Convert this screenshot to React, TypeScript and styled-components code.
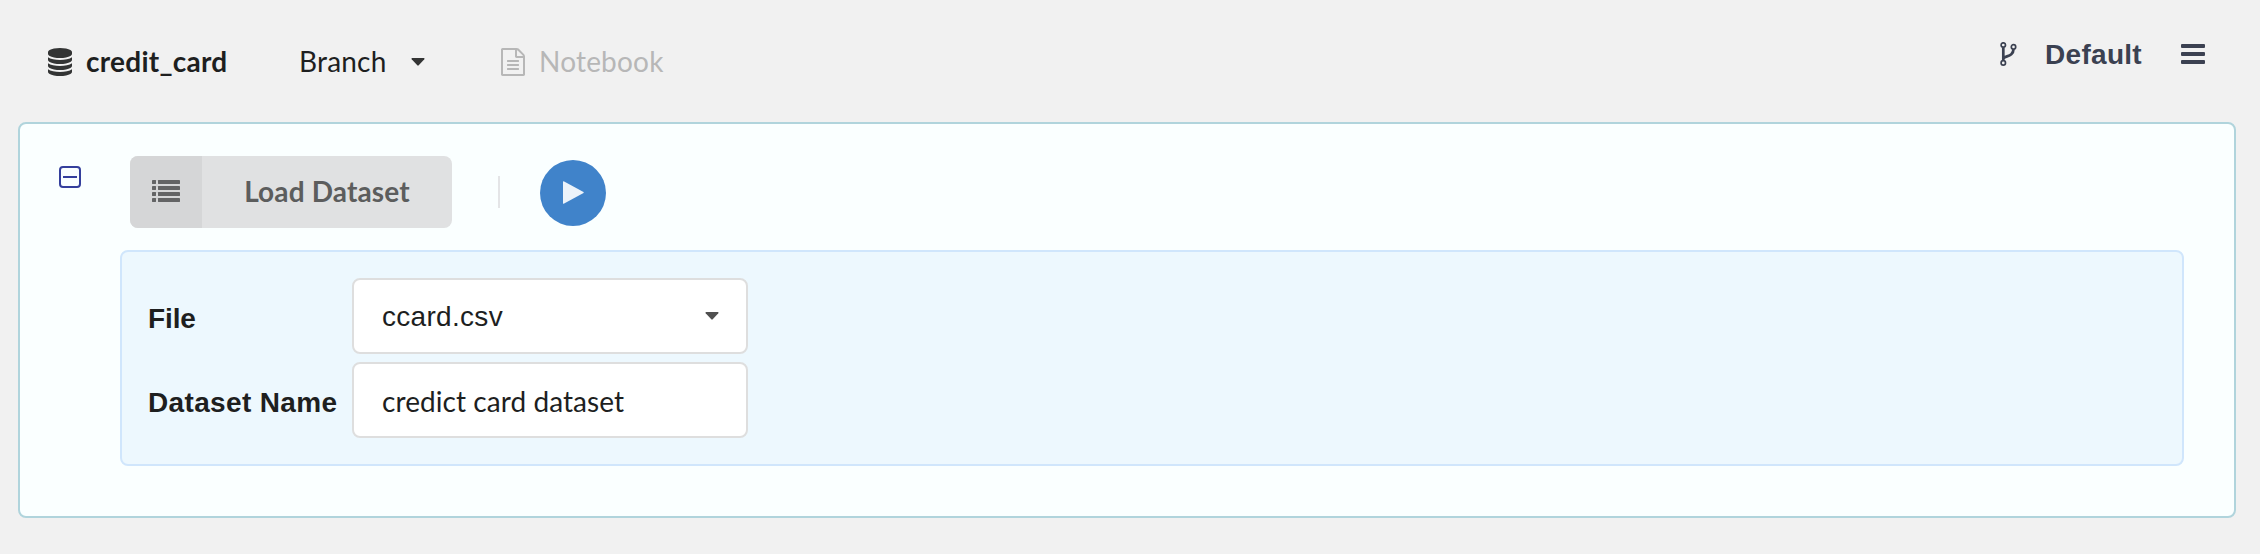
import React from "react";
import styled, { createGlobalStyle } from "styled-components";

const LATO = `Lato, "Open Sans", sans-serif`;
const HELVETICA = `"Liberation Sans", Arial, sans-serif`;

const GlobalStyle = createGlobalStyle`
  *, *::before, *::after { box-sizing: border-box; }
  body {
    margin: 0;
    background: #f1f1f1;
    font-family: ${LATO};
    font-size: 28px;
    line-height: 34px;
    color: #1e1f1f;
  }
  svg { display: block; flex: none; }
`;

const Page = styled.main`
  display: flex;
  flex-direction: column;
  height: 554px;
  padding: 0 24px 36px 18px;
`;

const TopBar = styled.header`
  display: flex;
  align-items: flex-start;
  justify-content: space-between;
  height: 122px;
  padding: 0 30px;
`;

const BarGroup = styled.nav`
  display: flex;
  padding-top: 44px;
`;

const BarItem = styled.div<{ $width?: number; $gap: number; $muted?: boolean }>`
  display: flex;
  align-items: center;
  gap: ${(p) => p.$gap}px;
  width: ${(p) => (p.$width ? `${p.$width}px` : "auto")};
  color: ${(p) => (p.$muted ? "#b7b7b7" : "#1e1f1f")};

  svg { margin-top: 2px; }
`;

const Text = styled.span<{ $bold?: boolean; $spacing?: number }>`
  font-weight: ${(p) => (p.$bold ? 700 : 400)};
  letter-spacing: ${(p) => p.$spacing ?? 0}px;
  white-space: nowrap;
`;

const RightGroup = styled.nav`
  display: flex;
  align-items: center;
  padding: 36px 1px 0 0;
  color: #3b4151;
  font-family: ${HELVETICA};
`;

const DefaultLabel = styled(Text)`
  width: 136px;
  margin-left: 28px;
  padding-top: 2px;
`;

const Card = styled.section`
  display: flex;
  align-items: flex-start;
  height: 396px;
  padding: 32px 50px 0 39px;
  background: #faffff;
  border: 2px solid #b0d4dc;
  border-radius: 8px;
`;

const Toggle = styled.button`
  display: flex;
  align-items: center;
  justify-content: center;
  flex: none;
  width: 22px;
  height: 22px;
  margin: 10px 39px 0 0;
  padding: 0;
  background: transparent;
  border: 2px solid #343f9c;
  border-radius: 4px;
`;

const Minus = styled.span`
  width: 14px;
  height: 2px;
  background: #343f9c;
`;

const Body = styled.div`
  display: flex;
  flex: 1;
  flex-direction: column;
`;

const Actions = styled.div`
  display: flex;
  align-items: center;
  height: 72px;
  padding-left: 10px;
`;

const LoadButton = styled.button`
  display: flex;
  width: 322px;
  height: 72px;
  padding: 0;
  overflow: hidden;
  border: 0;
  border-radius: 8px;
  background: #e0e1e2;
  color: #5c5d5d;
  font: 700 28px/34px ${LATO};
`;

const ButtonIcon = styled.span`
  display: flex;
  align-items: center;
  justify-content: center;
  width: 72px;
  height: 72px;
  padding-bottom: 2px;
  background: #d5d6d7;
`;

const ButtonLabel = styled.span`
  flex: 1;
  padding-top: 18px;
  letter-spacing: 0.15px;
  text-align: center;
`;

const Divider = styled.span`
  width: 2px;
  height: 32px;
  margin: 0 40px 0 46px;
  background: #e4e5e7;
`;

const PlayButton = styled.button`
  display: flex;
  align-items: center;
  justify-content: center;
  width: 66px;
  height: 66px;
  margin-top: 2px;
  padding: 0 0 1px 1px;
  border: 0;
  border-radius: 50%;
  background: #4083ca;
`;

const Panel = styled.form`
  display: grid;
  grid-template-columns: 204px 396px;
  grid-auto-rows: 76px;
  row-gap: 8px;
  height: 216px;
  margin-top: 22px;
  padding: 26px 0 0 26px;
  background: #edf8fe;
  border: 2px solid #d0e6fc;
  border-radius: 8px;
`;

const FieldLabel = styled.label<{ $spacing: number }>`
  padding-top: 24px;
  font-family: ${HELVETICA};
  font-weight: 700;
  letter-spacing: ${(p) => p.$spacing}px;
  white-space: nowrap;
`;

const Field = styled.div<{ $font: string }>`
  display: flex;
  align-items: flex-start;
  justify-content: space-between;
  padding: 20px 27px 0 28px;
  background: #fff;
  border: 2px solid #dedede;
  border-radius: 8px;
  font-family: ${(p) => p.$font};
`;

const SelectCaret = styled.span`
  padding-top: 12px;
`;

const DatabaseIcon = () => (
  <svg width="24" height="28" viewBox="0 0 1536 1792" fill="#333434">
    <path d="M768 768q237 0 443-43t325-127v170q0 69-103 128t-280 93.500-385 34.500-385-34.500-280-93.500-103-128v-170q119 84 325 127t443 43zm0 768q237 0 443-43t325-127v170q0 69-103 128t-280 93.500-385 34.500-385-34.500-280-93.500-103-128v-170q119 84 325 127t443 43zm0-384q237 0 443-43t325-127v170q0 69-103 128t-280 93.500-385 34.500-385-34.500-280-93.500-103-128v-170q119 84 325 127t443 43zm0-1152q208 0 385 34.500t280 93.500 103 128v128q0 69-103 128t-280 93.500-385 34.500-385-34.500-280-93.500-103-128v-128q0-69 103-128t280-93.500 385-34.500z" />
  </svg>
);

const FileIcon = () => (
  <svg width="24" height="28" viewBox="0 0 1536 1792" fill="currentColor">
    <path d="M1468 380q28 28 48 76t20 88v1152q0 40-28 68t-68 28h-1344q-40 0-68-28t-28-68v-1600q0-40 28-68t68-28h896q40 0 88 20t76 48zm-444-244v376h376q-10-29-22-41l-313-313q-12-12-41-22zm384 1528v-1024h-416q-40 0-68-28t-28-68v-416h-768v1536h1280zm-1024-864q0-14 9-23t23-9h704q14 0 23 9t9 23v64q0 14-9 23t-23 9h-704q-14 0-23-9t-9-23v-64zm736 224q14 0 23 9t9 23v64q0 14-9 23t-23 9h-704q-14 0-23-9t-9-23v-64q0-14 9-23t23-9h704zm0 256q14 0 23 9t9 23v64q0 14-9 23t-23 9h-704q-14 0-23-9t-9-23v-64q0-14 9-23t23-9h704z" />
  </svg>
);

const CaretIcon = ({ color = "#333434" }: { color?: string }) => (
  <svg width="14" height="8" viewBox="0 0 14 8" fill={color}>
    <path d="M1 0H13Q14 .3 13.300 1.300L7.700 7.300Q7 8 6.300 7.300L.7 1.300Q0 .3 1 0Z" />
  </svg>
);

const ForkIcon = () => (
  <svg width="17" height="24" viewBox="0 0 17 24" fill="none" stroke="currentColor">
    <g strokeWidth="1.700">
      <circle cx="3.300" cy="3" r="2.200" />
      <circle cx="13.500" cy="4.900" r="2.200" />
      <circle cx="3.300" cy="20.900" r="2.200" />
    </g>
    <path d="M3.300 5.200V18.700M3.300 16.500C5 13.400 13.300 15.200 13.500 7.100" strokeWidth="2.700" />
  </svg>
);

const BarsIcon = () => (
  <svg width="24" height="20" viewBox="0 0 24 20" fill="currentColor">
    <rect width="24" height="4" rx="1" />
    <rect y="8" width="24" height="4" rx="1" />
    <rect y="16" width="24" height="4" rx="1" />
  </svg>
);

const ListIcon = () => (
  <svg width="28" height="22" viewBox="0 0 28 22" fill="#636465">
    {[0, 6, 12, 18].map((y) => (
      <g key={y}>
        <rect y={y} width="4" height="4" rx="0.400" />
        <rect x="6" y={y} width="22" height="4" rx="0.400" />
      </g>
    ))}
  </svg>
);

const PlayIcon = () => (
  <svg width="21" height="23" viewBox="0 0 21 23" fill="#ecf3fa">
    <path d="M0 .7Q0 0 .7 .3L20.500 11Q21 11.500 20.500 12L.7 22.700Q0 23 0 22.300Z" />
  </svg>
);

export default function App() {
  return (
    <>
      <GlobalStyle />
      <Page>
        <TopBar>
          <BarGroup>
            <BarItem $width={251} $gap={14}>
              <DatabaseIcon />
              <Text $bold $spacing={0.25}>credit_card</Text>
            </BarItem>
            <BarItem $width={202} $gap={24}>
              <Text $spacing={0.2}>Branch</Text>
              <CaretIcon />
            </BarItem>
            <BarItem $gap={14} $muted>
              <FileIcon />
              <Text $spacing={0.2}>Notebook</Text>
            </BarItem>
          </BarGroup>
          <RightGroup>
            <ForkIcon />
            <DefaultLabel $bold $spacing={0.3}>Default</DefaultLabel>
            <BarsIcon />
          </RightGroup>
        </TopBar>
        <Card>
          <Toggle aria-label="Collapse">
            <Minus />
          </Toggle>
          <Body>
            <Actions>
              <LoadButton>
                <ButtonIcon>
                  <ListIcon />
                </ButtonIcon>
                <ButtonLabel>Load Dataset</ButtonLabel>
              </LoadButton>
              <Divider />
              <PlayButton aria-label="Run">
                <PlayIcon />
              </PlayButton>
            </Actions>
            <Panel>
              <FieldLabel $spacing={-0.1}>File</FieldLabel>
              <Field $font={HELVETICA}>
                <Text $spacing={0.3}>ccard.csv</Text>
                <SelectCaret>
                  <CaretIcon color="#505050" />
                </SelectCaret>
              </Field>
              <FieldLabel $spacing={0.35}>Dataset Name</FieldLabel>
              <Field $font={LATO}>
                <Text $spacing={0.07}>credict card dataset</Text>
              </Field>
            </Panel>
          </Body>
        </Card>
      </Page>
    </>
  );
}
